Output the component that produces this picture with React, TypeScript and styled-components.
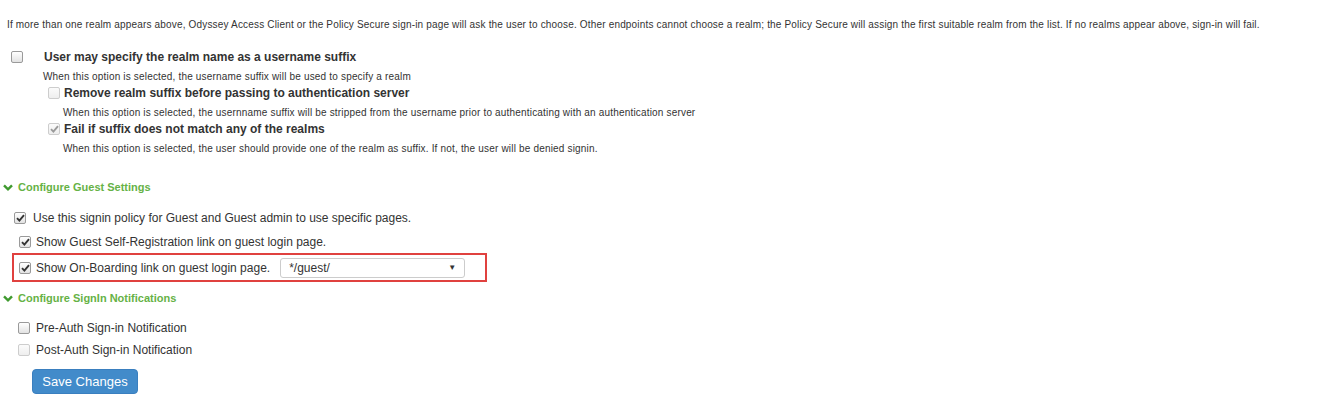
import styled, { createGlobalStyle } from 'styled-components';

const GlobalStyle = createGlobalStyle`
  body {
    margin: 0;
    background: #ffffff;
    font-family: "Liberation Sans", Arial, sans-serif;
    color: #333333;
  }
`;

const Page = styled.div`
  padding-top: 18px;
  width: 1340px;
  height: 400px;
  box-sizing: border-box;
  display: flex;
  flex-direction: column;
`;

const Note = styled.p`
  margin: 0;
  padding-left: 7px;
  font-size: 10px;
  line-height: 14px;
  letter-spacing: 0.17px;
  color: #333333;
`;

const OptionRow = styled.div<{ $indent: number; $gap: number; $top: number; $height?: number }>`
  display: flex;
  align-items: center;
  height: ${p => p.$height ?? 18}px;
  margin-top: ${p => p.$top}px;
  padding-left: ${p => p.$indent}px;
  gap: ${p => p.$gap}px;
`;

const BoldLabel = styled.span`
  font-size: 12px;
  font-weight: bold;
  color: #333333;
`;

const PlainLabel = styled.span`
  font-size: 12px;
  color: #333333;
`;

const Description = styled.p<{ $indent: number; $top: number }>`
  margin: ${p => p.$top}px 0 0;
  padding-left: ${p => p.$indent}px;
  font-size: 10px;
  line-height: 14px;
  letter-spacing: 0.18px;
  color: #333333;
`;

const SectionHeading = styled.div<{ $top: number }>`
  display: flex;
  align-items: center;
  gap: 5px;
  height: 16px;
  margin-top: ${p => p.$top}px;
  padding-left: 3px;
  font-size: 11px;
  font-weight: bold;
  color: #66b246;
`;

const Box = styled.span<{ $disabled: boolean }>`
  display: inline-flex;
  align-items: center;
  justify-content: center;
  flex: none;
  width: 10px;
  height: 10px;
  border-radius: 2px;
  border: 1px solid ${p => (p.$disabled ? '#cdcdcd' : '#9a9a9a')};
  background: ${p =>
    p.$disabled
      ? 'linear-gradient(#fbfbfb, #eeeeee)'
      : 'linear-gradient(#ffffff, #e2e2e2)'};
  box-sizing: content-box;
`;

const Highlight = styled.div`
  display: flex;
  align-items: center;
  gap: 10px;
  width: 475px;
  height: 29px;
  margin: 2px 0 0 12px;
  padding-left: 5px;
  box-sizing: border-box;
  border: 2px solid #e0413f;
`;

const BoxedLabel = styled.div`
  display: flex;
  align-items: center;
  gap: 5px;
`;

const Select = styled.div`
  display: flex;
  align-items: center;
  justify-content: space-between;
  width: 185px;
  height: 20px;
  box-sizing: border-box;
  padding: 0 8px 0 8px;
  border: 1px solid #cccccc;
  border-radius: 3px;
  background: #ffffff;
  font-size: 12px;
  color: #333333;
`;

const Caret = styled.span`
  font-size: 8px;
  color: #333333;
`;

const SaveButton = styled.button`
  margin: 10px 0 0 32px;
  width: 106px;
  height: 25px;
  padding: 0;
  border: 1px solid #3a7fbf;
  border-radius: 4px;
  background: #428bca;
  color: #ffffff;
  font-family: "Liberation Sans", Arial, sans-serif;
  font-size: 13px;
  cursor: pointer;
`;

const Checkbox = ({ checked = false, disabled = false }: { checked?: boolean; disabled?: boolean }) => (
  <Box $disabled={disabled}>
    {checked && (
      <svg width="9" height="8" viewBox="0 0 9 8">
        <path
          d="M1 4.2 L3.4 6.6 L8 1.2"
          fill="none"
          stroke={disabled ? '#9a9a9a' : '#333333'}
          strokeWidth="1.9"
        />
      </svg>
    )}
  </Box>
);

const Chevron = () => (
  <svg width="10" height="7" viewBox="0 0 10 7">
    <path d="M1 1.3 L5 5.3 L9 1.3" fill="none" stroke="#3f9a2f" strokeWidth="2.4" />
  </svg>
);

export default function App() {
  return (
    <>
      <GlobalStyle />
      <Page>
        <Note>
          If more than one realm appears above, Odyssey Access Client or the Policy Secure sign-in page will ask the user to choose. Other endpoints cannot choose a realm; the Policy Secure will assign the first suitable realm from the list. If no realms appear above, sign-in will fail.
        </Note>

        <OptionRow $indent={11} $gap={21} $top={15} $height={20}>
          <Checkbox />
          <BoldLabel>User may specify the realm name as a username suffix</BoldLabel>
        </OptionRow>
        <Description $indent={43} $top={3}>
          When this option is selected, the username suffix will be used to specify a realm
        </Description>

        <OptionRow $indent={48} $gap={4} $top={0}>
          <Checkbox disabled />
          <BoldLabel>Remove realm suffix before passing to authentication server</BoldLabel>
        </OptionRow>
        <Description $indent={63} $top={4}>
          When this option is selected, the usernname suffix will be stripped from the username prior to authenticating with an authentication server
        </Description>

        <OptionRow $indent={48} $gap={4} $top={0}>
          <Checkbox checked disabled />
          <BoldLabel>Fail if suffix does not match any of the realms</BoldLabel>
        </OptionRow>
        <Description $indent={63} $top={4}>
          When this option is selected, the user should provide one of the realm as suffix. If not, the user will be denied signin.
        </Description>

        <SectionHeading $top={23}>
          <Chevron />
          Configure Guest Settings
        </SectionHeading>

        <OptionRow $indent={14} $gap={7} $top={14}>
          <Checkbox checked />
          <PlainLabel>Use this signin policy for Guest and Guest admin to use specific pages.</PlainLabel>
        </OptionRow>

        <OptionRow $indent={19} $gap={5} $top={6}>
          <Checkbox checked />
          <PlainLabel>Show Guest Self-Registration link on guest login page.</PlainLabel>
        </OptionRow>

        <Highlight>
          <BoxedLabel>
            <Checkbox checked />
            <PlainLabel>Show On-Boarding link on guest login page.</PlainLabel>
          </BoxedLabel>
          <Select>
            */guest/
            <Caret>▼</Caret>
          </Select>
        </Highlight>

        <SectionHeading $top={8}>
          <Chevron />
          Configure SignIn Notifications
        </SectionHeading>

        <OptionRow $indent={18} $gap={6} $top={13}>
          <Checkbox />
          <PlainLabel>Pre-Auth Sign-in Notification</PlainLabel>
        </OptionRow>

        <OptionRow $indent={18} $gap={6} $top={4}>
          <Checkbox disabled />
          <PlainLabel>Post-Auth Sign-in Notification</PlainLabel>
        </OptionRow>

        <div>
          <SaveButton>Save Changes</SaveButton>
        </div>
      </Page>
    </>
  );
}
